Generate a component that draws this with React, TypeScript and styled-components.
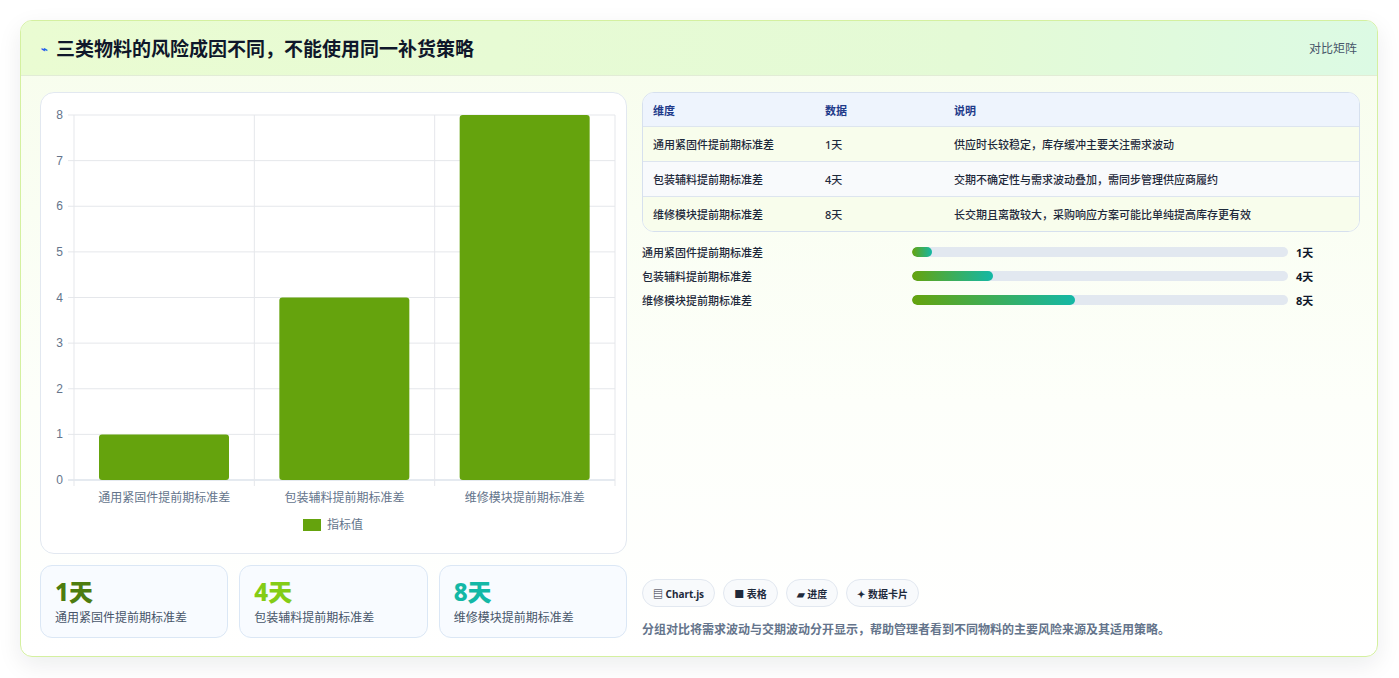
import React from "react";
import styled, { createGlobalStyle } from "styled-components";

const Global = createGlobalStyle`
  html, body { margin: 0; padding: 0; background: #ffffff; }
  body { font-family: "Noto Sans", "Noto Sans CJK SC", sans-serif; }
  * { box-sizing: border-box; }
`;

const Page = styled.div`
  width: 1399px; height: 678px; padding: 20px 21px 21px 20px;
`;
const Card = styled.div`
  height: 637px; border: 1px solid #d4f0a0; border-radius: 12px;
  background: linear-gradient(180deg, #f7fdec 0%, #fdfffa 60%, #ffffff 100%);
  box-shadow: 0 8px 24px rgba(15, 23, 42, 0.08);
  overflow: hidden; display: flex; flex-direction: column;
`;
const Header = styled.div`
  height: 55px; flex: none; display: flex; align-items: center; justify-content: space-between;
  padding: 0 20px 0 20px; border-bottom: 1px solid #e2ecd6;
  background: linear-gradient(90deg, #eafcd2 0%, #e4fad6 70%, #dcfae4 100%);
`;
const Title = styled.h1`
  margin: 0; font-size: 19px; font-weight: 700; color: #0f172a; display: flex; align-items: center; gap: 8px;
`;
const Bolt = styled.span` font-size: 11px; color: #2563eb; `;
const HeaderTag = styled.span` font-size: 12px; color: #475569; `;
const Body = styled.div`
  flex: 1; display: grid; grid-template-columns: 587px 1fr; gap: 15px; padding: 16px 17px 18px 19px;
`;
const Left = styled.div` display: flex; flex-direction: column; gap: 11px; `;
const ChartCard = styled.div`
  height: 462px; border: 1px solid #e2e8f0; border-radius: 14px; background: #fff;
`;
const Stats = styled.div` display: grid; grid-template-columns: repeat(3, 1fr); gap: 11px; `;
const Stat = styled.div`
  height: 73px; border: 1px solid #dbe7f5; border-radius: 12px; background: #f8fbff;
  padding: 12px 14px; display: flex; flex-direction: column; gap: 2px;
`;
const StatValue = styled.div<{ $c: string }>` font-size: 24px; font-weight: 800; color: ${p => p.$c}; line-height: 28px; `;
const StatLabel = styled.div` font-size: 12px; color: #475569; `;
const Right = styled.div` display: flex; flex-direction: column; `;
const Table = styled.div`
  border: 1px solid #d6e0ee; border-radius: 12px; overflow: hidden; background: #fff;
`;
const Row = styled.div<{ $bg: string; $head?: boolean }>`
  display: grid; grid-template-columns: 172px 129px 1fr; align-items: center; padding: 0 10px;
  height: ${p => (p.$head ? 33 : 35)}px; background: ${p => p.$bg};
  border-top: ${p => (p.$head ? "none" : "1px solid #dde5ef")};
  font-size: 11px; color: ${p => (p.$head ? "#1e3a8a" : "#1e293b")}; font-weight: ${p => (p.$head ? 700 : 500)};
`;
const Bars = styled.div` display: flex; flex-direction: column; gap: 8px; margin-top: 12px; `;
const BarRow = styled.div`
  display: grid; grid-template-columns: 270px 376px 1fr; align-items: center; gap: 0; height: 16px;
  font-size: 11px; color: #1e293b; font-weight: 500;
`;
const Track = styled.div` height: 10px; border-radius: 5px; background: #e2e8f0; overflow: hidden; `;
const Fill = styled.div` height: 100%; border-radius: 5px; background: linear-gradient(90deg, #65a30d, #14b8a6); `;
const BarVal = styled.span` padding-left: 8px; font-weight: 700; color: #0f172a; `;
const Spacer = styled.div` flex: 1; `;
const Chips = styled.div` display: flex; gap: 8px; `;
const Chip = styled.span`
  height: 28px; padding: 0 10px; border: 1px solid #e2e8f0; border-radius: 14px; background: #f8fafc;
  display: inline-flex; align-items: center; gap: 4px; font-size: 10px; font-weight: 700; color: #1e293b;
`;
const Note = styled.p` margin: 13px 0 0; font-size: 12px; font-weight: 600; color: #64748b; `;

const labels = ["通用紧固件提前期标准差", "包装辅料提前期标准差", "维修模块提前期标准差"];
const vals = [1, 4, 8];
const notes = ["供应时长较稳定，库存缓冲主要关注需求波动", "交期不确定性与需求波动叠加，需同步管理供应商履约", "长交期且离散较大，采购响应方案可能比单纯提高库存更有效"];

function Chart() {
  const x0 = 33, x1 = 574, yTop = 22, yBot = 387;
  const unit = (yBot - yTop) / 8;
  const cw = (x1 - x0) / 3;
  return (
    <svg width="585" height="460" style={{ display: "block" }}>
      {Array.from({ length: 9 }, (_, i) => (
        <g key={i}>
          <line x1={x0 - 6} x2={x1} y1={yBot - i * unit} y2={yBot - i * unit} stroke={i === 0 ? "#cbd5e1" : "#e5e7eb"} />
          <text x={22} y={yBot - i * unit + 4} fontSize="12" fill="#64748b" textAnchor="end" fontFamily="Liberation Sans, sans-serif">{i}</text>
        </g>
      ))}
      {[0, 1, 2, 3].map(i => (
        <line key={i} x1={x0 + i * cw} x2={x0 + i * cw} y1={yTop} y2={yBot + 6} stroke="#e5e7eb" />
      ))}
      {vals.map((v, i) => (
        <g key={i}>
          <rect x={x0 + i * cw + 25} y={yBot - v * unit} width={130} height={v * unit} rx={3} fill="#65a30d" />
          <text x={x0 + i * cw + cw / 2} y={409} fontSize="12" fill="#64748b" textAnchor="middle" fontFamily="Noto Sans CJK SC, sans-serif">{labels[i]}</text>
        </g>
      ))}
      <rect x={262} y={426} width={18} height={12} fill="#65a30d" />
      <text x={286} y={436} fontSize="12" fill="#64748b" fontFamily="Noto Sans CJK SC, sans-serif">指标值</text>
    </svg>
  );
}

export default function App() {
  return (
    <Page>
      <Global />
      <Card>
        <Header>
          <Title><Bolt>⌁</Bolt>三类物料的风险成因不同，不能使用同一补货策略</Title>
          <HeaderTag>对比矩阵</HeaderTag>
        </Header>
        <Body>
          <Left>
            <ChartCard><Chart /></ChartCard>
            <Stats>
              {["#4d7c0f", "#84cc16", "#14b8a6"].map((c, i) => (
                <Stat key={i}>
                  <StatValue $c={c}>{vals[i]}天</StatValue>
                  <StatLabel>{labels[i]}</StatLabel>
                </Stat>
              ))}
            </Stats>
          </Left>
          <Right>
            <Table>
              <Row $head $bg="#eef4fd"><span>维度</span><span>数据</span><span>说明</span></Row>
              {labels.map((l, i) => (
                <Row key={i} $bg={i % 2 === 1 ? "#f8fafc" : "#f8fdec"}>
                  <span>{l}</span><span>{vals[i]}天</span><span>{notes[i]}</span>
                </Row>
              ))}
            </Table>
            <Bars>
              {labels.map((l, i) => (
                <BarRow key={i}>
                  <span>{l}</span>
                  <Track><Fill style={{ width: `${[5.3, 21.6, 43.3][i]}%` }} /></Track>
                  <BarVal>{vals[i]}天</BarVal>
                </BarRow>
              ))}
            </Bars>
            <Spacer />
            <Chips>
              <Chip>▤ Chart.js</Chip>
              <Chip>■ 表格</Chip>
              <Chip>▰ 进度</Chip>
              <Chip>✦ 数据卡片</Chip>
            </Chips>
            <Note>分组对比将需求波动与交期波动分开显示，帮助管理者看到不同物料的主要风险来源及其适用策略。</Note>
          </Right>
        </Body>
      </Card>
    </Page>
  );
}
